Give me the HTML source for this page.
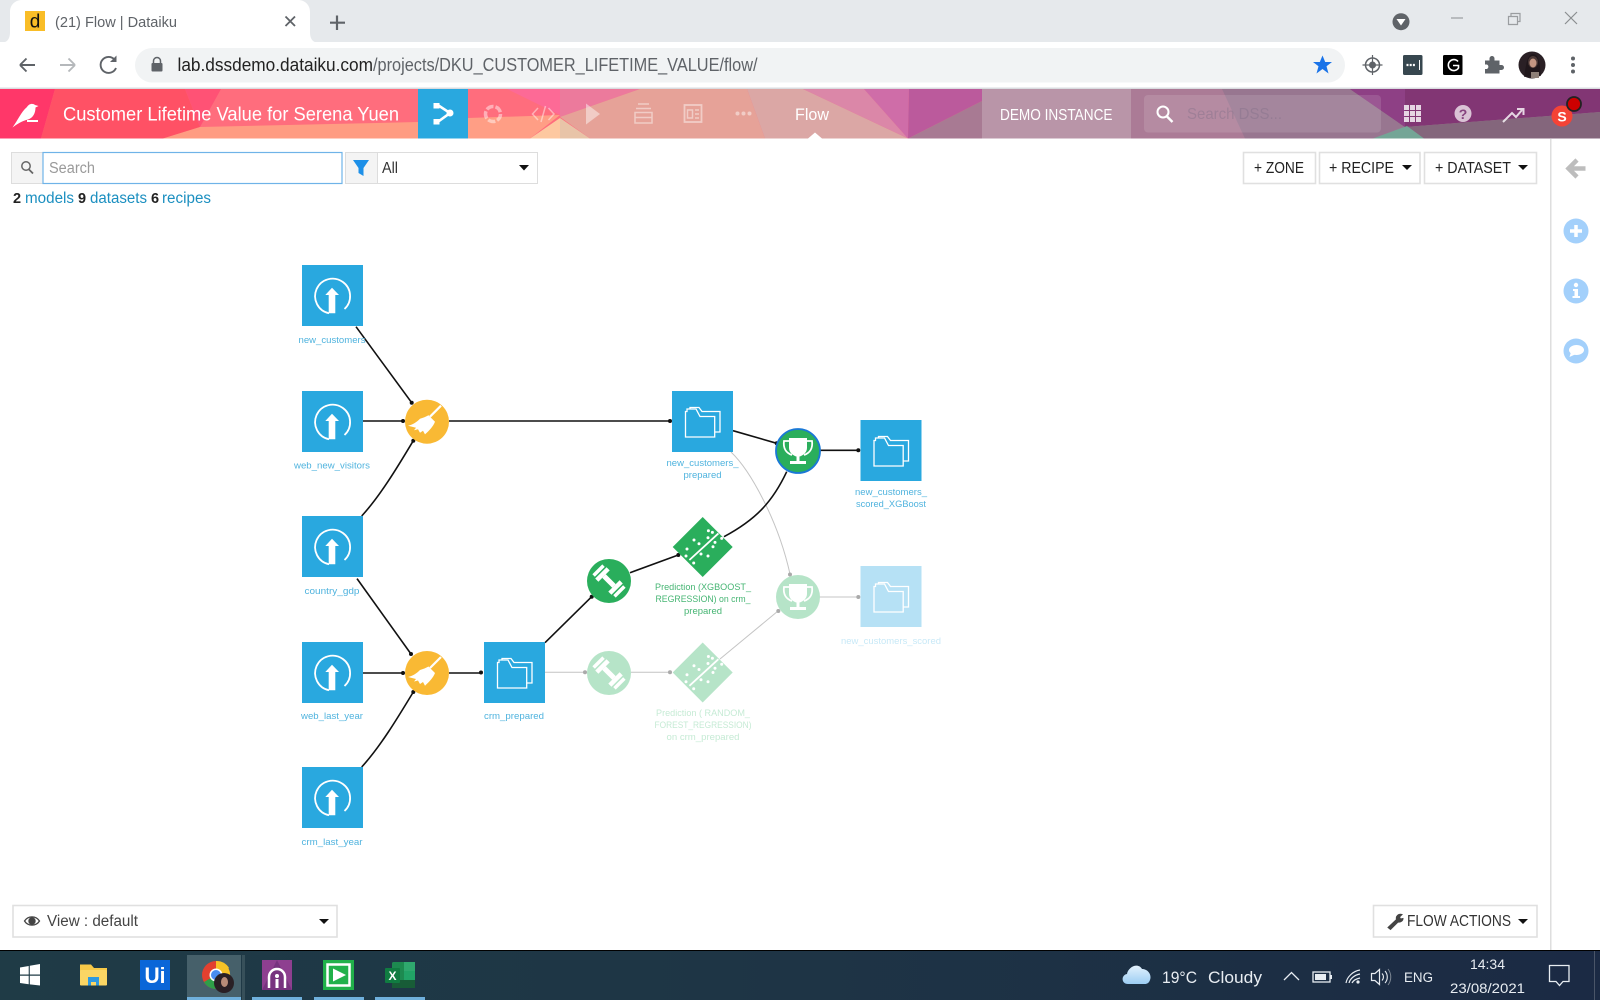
<!DOCTYPE html>
<html><head><meta charset="utf-8"><title>Flow | Dataiku</title>
<style>
html,body{margin:0;padding:0;background:#fff;width:1600px;height:1000px;overflow:hidden}
svg{display:block}
text{font-family:"Liberation Sans",sans-serif}
.l{font-size:9.5px;text-anchor:middle}
.b{fill:#4fb3de}.g{fill:#46b573}.fg{fill:#c6ebd5}.fb{fill:#c8e9f7}
.e{fill:none;stroke:#111;stroke-width:1.6}
.f{fill:none;stroke:#c4c4c4;stroke-width:1}
.btn{fill:#fff;stroke:#e0e0e0;stroke-width:1.6}
.bt{font-size:15.5px;fill:#222}
</style></head><body>
<svg width="1600" height="1000" viewBox="0 0 1600 1000" xmlns="http://www.w3.org/2000/svg">
<defs>
<g id="up"><rect width="61" height="61" fill="#29a8df"/><path d="M27 48.3A17.5 17.5 0 1 1 42.5 44" fill="none" stroke="#fff" stroke-width="1.8"/><path d="M26.7 48.3V30H23.3L30 22.7 37 30H33.3V48.3Z" fill="#fff"/></g>
<g id="fo"><path d="M13.5 46V20.500H15V18H24l4 7.500H42.700V46Z" fill="none" stroke="#fff" stroke-width="1.300"/><path d="M18 18V16.500H27l3 4H48V41H42.700" fill="none" stroke="#fff" stroke-width="1.300"/></g>
<g id="dt"><rect width="61" height="61" fill="#29a8df"/><use href="#fo"/></g>
<g id="dtf"><rect width="61" height="61" fill="#b6e1f5"/><use href="#fo"/></g>
<g id="br"><circle r="22" fill="#f9b934"/><path d="M3-5 14-16" stroke="#fff" stroke-width="2.200"/><path d="M1.500-6.500 8 0C6 5 2 9-2 12.700L-4 9-7 11-9 7.500-13 8.500-11 6-19 4C-14 3-10 0-7-3-4-4-1-5 1.500-6.500Z" fill="#fff"/></g>
<g id="tr"><path d="M-9-13H9V-3C9 2 4 5 1.500 5.500V10H8V13H-8V10H-1.500V5.500C-4 5-9 2-9-3Z" fill="#fff"/><path d="M-9-10H-14C-15-3-12 2-6 4M9-10H14C15-3 12 2 6 4" fill="none" stroke="#fff" stroke-width="1.800"/></g>
<g id="db"><g transform="rotate(45)" fill="#fff"><rect x="-7" y="-2.500" width="14" height="5"/><rect x="-11.500" y="-8" width="4.500" height="16"/><rect x="-16.500" y="-7" width="3.500" height="14"/><rect x="7" y="-8" width="4.500" height="16"/><rect x="13" y="-7" width="3.500" height="14"/></g></g>
<g id="dm"><path d="M-13.300 13.300 15.700-13.300" stroke="#fff" stroke-width="1.800"/><g fill="#fff"><circle cx="5.700" cy="-16" r="1.500"/><circle cx="9.700" cy="-14.300" r="1.500"/><circle cx="5.300" cy="-9" r="1.500"/><circle cx="-8.700" cy="-6.700" r="1.500"/><circle cx="-3.700" cy="-3" r="1.500"/><circle cx="12.300" cy="-4.300" r="1.500"/><circle cx="10.300" cy="0" r="1.500"/><circle cx="19" cy="-8.300" r="1.500"/><circle cx="-15.700" cy="2.300" r="1.500"/><circle cx="-16.700" cy="9.300" r="1.500"/><circle cx="-1.700" cy="7.300" r="1.500"/><circle cx="5.300" cy="9.300" r="1.500"/><circle cx="-9" cy="16.300" r="1.500"/></g></g>
<linearGradient id="cl" x1="0" x2="0" y1="0" y2="1"><stop offset="0" stop-color="#e3f2fd"/><stop offset="1" stop-color="#9ccdf3"/></linearGradient>
<linearGradient id="tb" x1="0" x2="1" y1="0" y2="0"><stop offset="0" stop-color="#1f3b46"/><stop offset=".45" stop-color="#1e3545"/><stop offset="1" stop-color="#1b2a44"/></linearGradient>
</defs>

<!-- chrome -->
<rect width="1600" height="42" fill="#e6e9ec"/>
<path d="M0 43C8 43 10 38 10 32V12C10 5 15 0 22 0H298C305 0 310 5 310 12V32C310 38 312 43 320 43Z" fill="#fff"/>
<rect x="25" y="11" width="20" height="20" fill="#f9bd27"/>
<text x="35" y="27.500" font-size="19" text-anchor="middle" fill="#111">d</text>
<text x="55" y="27" font-size="15" fill="#5f6368" textLength="122" lengthAdjust="spacingAndGlyphs">(21) Flow | Dataiku</text>
<path d="M285.500 16.500 295 26M295 16.500 285.500 26" stroke="#5f6368" stroke-width="1.800"/>
<path d="M337 15.500V30M330 22.700H345" stroke="#5f6368" stroke-width="2.200"/>
<circle cx="1401" cy="21.700" r="8.500" fill="#5f6368"/><path d="M1396.500 19H1405.500L1401 25.500Z" fill="#fff"/>
<path d="M1451 18H1463" stroke="#9a9da0" stroke-width="1.200"/>
<path d="M1508.500 16.500H1517.500V24.500H1508.500ZM1511 16.500V13.500H1520V21.500H1517.500" fill="none" stroke="#9a9da0" stroke-width="1.200"/>
<path d="M1565 12 1577 24M1577 12 1565 24" stroke="#8a8d90" stroke-width="1.200"/>
<rect y="42" width="1600" height="47" fill="#fff"/>
<rect y="87.500" width="1600" height="1.500" fill="#dadce0"/>
<path d="M20 65H35M20 65l6.500-6.500M20 65l6.500 6.500" fill="none" stroke="#5f6368" stroke-width="1.900"/>
<path d="M60 65H75M75 65l-6.500-6.500M75 65l-6.500 6.500" fill="none" stroke="#b5b8bb" stroke-width="1.900"/>
<path d="M114.500 59.500A8 8 0 1 0 116 68" fill="none" stroke="#5f6368" stroke-width="1.900"/><path d="M116.500 55.500V62H110Z" fill="#5f6368"/>
<rect x="135" y="48" width="1210" height="34.500" rx="17.200" fill="#f1f3f4"/>
<path d="M153.500 63.500V61A3.500 3.500 0 0 1 160.500 61V63.500" fill="none" stroke="#5f6368" stroke-width="1.500"/><rect x="151.500" y="63" width="11" height="8.500" rx="1" fill="#5f6368"/>
<text x="177.500" y="71" font-size="18" fill="#222" textLength="195.500" lengthAdjust="spacingAndGlyphs">lab.dssdemo.dataiku.com</text>
<text x="373" y="71" font-size="18" fill="#5f6368" textLength="384.500" lengthAdjust="spacingAndGlyphs">/projects/DKU_CUSTOMER_LIFETIME_VALUE/flow/</text>
<path d="M1322.500 55.500 1325.200 62H1332L1326.500 66.300 1328.500 73.500 1322.500 69 1316.500 73.500 1318.500 66.300 1313 62H1319.800Z" fill="#1a73e8"/>
<circle cx="1372.500" cy="65" r="7" fill="none" stroke="#5f6368" stroke-width="1.500"/><circle cx="1372.500" cy="65" r="3.500" fill="#5f6368"/><path d="M1372.500 55V75M1362.500 65H1382.500" stroke="#5f6368" stroke-width="1.200"/>
<rect x="1403" y="55" width="19.500" height="20" rx="1.500" fill="#37474f"/><path d="M1406.500 65h9" stroke="#fff" stroke-width="2.200" stroke-dasharray="2 1.200"/><path d="M1419.500 60V70" stroke="#fff" stroke-width="1"/>
<rect x="1443" y="55" width="19.500" height="20" rx="1.500" fill="#000"/><path d="M1458 61.500A5.500 5.500 0 1 0 1458.500 68V65.500H1453" fill="none" stroke="#fff" stroke-width="1.600"/>
<path d="M1485 61.500H1489.500V59.500A2.500 2.500 0 0 1 1494.500 59.500V61.500H1499.500V66H1501.500A2.500 2.500 0 0 1 1501.500 71H1499.500V74.500H1485V70H1487A2.500 2.500 0 0 0 1487 65.500H1485Z" fill="#5f6368" transform="translate(0,-1)"/>
<circle cx="1532" cy="65" r="13.500" fill="#2a2025"/><ellipse cx="1533" cy="62" rx="5" ry="6" fill="#d2a48e"/><path d="M1524 77C1526 66 1527 54 1533 54 1540 54 1540 68 1541 76Z" fill="#1d1418" opacity=".75"/><ellipse cx="1533" cy="63" rx="3.500" ry="4.500" fill="#c49682"/><rect x="1531" y="72" width="8" height="6" fill="#8e8078"/>
<g fill="#5f6368"><circle cx="1573" cy="58.500" r="2"/><circle cx="1573" cy="65" r="2"/><circle cx="1573" cy="71.500" r="2"/></g>

<!-- header -->
<rect y="89" width="1600" height="49.500" fill="#ff6d7d"/>
<polygon points="0,89 55,89 41,138.500 0,138.500" fill="#ff3769"/>
<polygon points="55,89 185,89 200,127 163,138.500 41,138.500" fill="#ff5165"/>
<polygon points="185,89 221,89 200,127" fill="#ff5275"/>
<polygon points="200,127 418,122 418,138.500 163,138.500" fill="#ff9c82"/>
<polygon points="468,118 560,115 530,138.500 468,138.500" fill="#ff9e85"/>
<polygon points="507,89 560,89 560,115" fill="#fd6a96"/>
<polygon points="530,138.500 560,118 560,138.500" fill="#fdc8a0"/>
<polygon points="560,118 590,138.500 560,138.500" fill="#e8c4a8"/>
<polygon points="560,89 640,89 560,117" fill="#ec7a9c"/>
<polygon points="640,89 747,89 765,138.500 590,138.500 560,117" fill="#e6a298"/>
<polygon points="747,89 803,89 908,138.500 765,138.500" fill="#dba7a5"/>
<polygon points="803,89 864,89 908,138.500" fill="#db87a8"/>
<polygon points="864,89 909,89 908,138.500" fill="#cf6da8"/>
<polygon points="909,89 982,89 982,101 908,138.500" fill="#bb5a9c"/>
<polygon points="908,138.500 982,101 982,138.500" fill="#a87a93"/>
<rect x="982" y="89" width="149" height="49.500" fill="#b995a8"/>
<rect x="1131" y="89" width="469" height="49.500" fill="#ab7b96"/>
<polygon points="1222,89 1350,89 1423,138.500 1245,138.500" fill="#987690"/>
<polygon points="1350,89 1600,89 1600,112 1405,127" fill="#823674"/>
<polygon points="1350,89 1405,89 1405,127" fill="#8e4085"/>
<polygon points="1405,127 1600,112 1600,138.500 1423,138.500" fill="#84667c"/>
<polygon points="1373,138.500 1407,126 1424,138.500" fill="#74a596"/>
<rect x="1144" y="95" width="237" height="37.500" rx="4" fill="#fff" opacity=".12"/>
<path d="M12.500 127.500C18 120 21 112 27 107 29 103.500 33 103 35 105L38.500 106 35.500 107.500C35.500 113 33 118 28 119.500 22 121 17 124 12.500 127.500Z" fill="#fff"/><rect x="27" y="120" width="11" height="2" fill="#fff"/>
<text x="63" y="120.500" font-size="19" fill="#fff" textLength="336" lengthAdjust="spacingAndGlyphs">Customer Lifetime Value for Serena Yuen</text>
<rect x="418" y="89" width="50" height="49.500" fill="#29a8df"/>
<path d="M437 104.500 450 113 437 122.500" fill="none" stroke="#fff" stroke-width="2.600"/><rect x="433.500" y="103" width="6" height="5.500" fill="#fff"/><rect x="433.500" y="119" width="6" height="5.500" fill="#fff"/><circle cx="450" cy="113" r="3.500" fill="#fff"/>
<g opacity=".45" fill="none" stroke="#fff">
<circle cx="493" cy="114" r="7.500" stroke-width="3.500" stroke-dasharray="7.400 2"/>
<path d="M538 108 532.500 114 538 120M548.500 108 554 114 548.500 120M545.500 106 541 122" stroke-width="1.500"/>
<path d="M586 103.500 600 114 586 124.500Z" fill="#fff" stroke="none"/>
<path d="M638 104H649M636 108.500H651M635 112.500H652V123H635ZM635 117.500H652" stroke-width="1.500"/>
<rect x="684.500" y="105" width="17" height="17" stroke-width="1.800"/>
<path d="M687.500 110h5v8h-5zM695 110h4M695 114h4M695 118h4" stroke-width="1.500"/>
<g fill="#fff" stroke="none"><circle cx="737.500" cy="113.500" r="2"/><circle cx="743.500" cy="113.500" r="2"/><circle cx="749.500" cy="113.500" r="2"/></g>
</g>
<text x="795" y="120" font-size="16.500" fill="#fff" textLength="34" lengthAdjust="spacingAndGlyphs">Flow</text>
<path d="M808 138.500 815 132.500 822 138.500Z" fill="#fff"/>
<text x="1000" y="120" font-size="15.500" fill="#fff" textLength="112.500" lengthAdjust="spacingAndGlyphs">DEMO INSTANCE</text>
<circle cx="1163" cy="112" r="5.500" fill="none" stroke="#fff" stroke-width="2"/><path d="M1167 116.500 1172.500 122" stroke="#fff" stroke-width="2.400"/>
<text x="1187" y="119" font-size="16" fill="#7f6f87" opacity=".4" textLength="95" lengthAdjust="spacingAndGlyphs">Search DSS...</text>
<g fill="#fff" opacity=".8"><rect x="1404" y="105" width="5" height="5"/><rect x="1410" y="105" width="5" height="5"/><rect x="1416" y="105" width="5" height="5"/><rect x="1404" y="111" width="5" height="5"/><rect x="1410" y="111" width="5" height="5"/><rect x="1416" y="111" width="5" height="5"/><rect x="1404" y="117" width="5" height="5"/><rect x="1410" y="117" width="5" height="5"/><rect x="1416" y="117" width="5" height="5"/></g>
<circle cx="1463" cy="113.500" r="8.500" fill="#fff" opacity=".7"/><text x="1463" y="119" font-size="14" font-weight="bold" text-anchor="middle" fill="#87447f">?</text>
<path d="M1503 122 1512 113 1516 117 1522 110M1517 109H1523.500V115" fill="none" stroke="#fff" stroke-opacity=".8" stroke-width="2"/>
<circle cx="1562" cy="116" r="10.500" fill="#f44336"/><text x="1562" y="121.500" font-size="14" font-weight="bold" text-anchor="middle" fill="#fff">S</text>
<circle cx="1574" cy="104" r="7" fill="#cc0000" stroke="#222" stroke-width="1.800"/>

<!-- controls -->
<rect x="11.500" y="152.500" width="32" height="31" fill="#f4f4f4" stroke="#ddd"/>
<circle cx="26" cy="166" r="4.200" fill="none" stroke="#666" stroke-width="1.500"/><path d="M29 169.500 33 173.500" stroke="#666" stroke-width="1.800"/>
<rect x="43" y="152.500" width="299" height="31" fill="#fff" stroke="#6fb3e8" stroke-width="1.200"/>
<text x="49" y="173" font-size="15.500" fill="#9a9a9a" textLength="46" lengthAdjust="spacingAndGlyphs">Search</text>
<rect x="345.500" y="152.500" width="32" height="31" fill="#f4f4f4" stroke="#ddd"/>
<path d="M353 160H369L363.500 168V176L358.500 173V168Z" fill="#1e90e8"/>
<rect x="377.500" y="152.500" width="160" height="31" fill="#fff" stroke="#ddd"/>
<text x="382" y="173" font-size="15.500" fill="#333" textLength="16" lengthAdjust="spacingAndGlyphs">All</text>
<path d="M519 165H529L524 170.500Z" fill="#111"/>
<g font-size="15.500">
<text x="13" y="203" font-weight="bold" fill="#222" font-size="14.500">2</text>
<text x="25" y="203" fill="#1b8fc0" textLength="49" lengthAdjust="spacingAndGlyphs">models</text>
<text x="78" y="203" font-weight="bold" fill="#222" font-size="14.500">9</text>
<text x="90" y="203" fill="#1b8fc0" textLength="57" lengthAdjust="spacingAndGlyphs">datasets</text>
<text x="151" y="203" font-weight="bold" fill="#222" font-size="14.500">6</text>
<text x="162" y="203" fill="#1b8fc0" textLength="49" lengthAdjust="spacingAndGlyphs">recipes</text>
</g>
<rect x="1243.500" y="152.500" width="72" height="31" class="btn"/>
<text x="1254" y="173" class="bt" textLength="50" lengthAdjust="spacingAndGlyphs">+ ZONE</text>
<rect x="1319.500" y="152.500" width="100.500" height="31" class="btn"/>
<text x="1329" y="173" class="bt" textLength="65" lengthAdjust="spacingAndGlyphs">+ RECIPE</text>
<path d="M1402 165H1412L1407 170Z" fill="#111"/>
<rect x="1424.500" y="152.500" width="112" height="31" class="btn"/>
<text x="1435" y="173" class="bt" textLength="76" lengthAdjust="spacingAndGlyphs">+ DATASET</text>
<path d="M1518 165H1528L1523 170Z" fill="#111"/>
<rect x="1550" y="139" width="1.500" height="811" fill="#dedede"/>
<path d="M1568.500 168.500H1585.500M1577 160 1568.500 168.500 1577 177" fill="none" stroke="#bdbdbd" stroke-width="4.500"/>
<circle cx="1576" cy="231" r="12.500" fill="#a3d0fb"/><path d="M1576 225V237M1570 231H1582" stroke="#fff" stroke-width="3.500"/>
<circle cx="1576" cy="291" r="12.500" fill="#a3d0fb"/><circle cx="1576" cy="285" r="2.200" fill="#fff"/><path d="M1573 289H1578V296H1580V298H1572.500V296H1574.500V291H1573Z" fill="#fff"/>
<circle cx="1576" cy="351" r="12.500" fill="#a3d0fb"/><ellipse cx="1576.500" cy="350" rx="7.500" ry="5" fill="#fff"/><path d="M1571 352 1569.500 357 1575 354.500Z" fill="#fff"/>

<!-- edges -->
<path class="f" d="M731 452C750 470 778 520 790 574"/>
<path class="f" d="M819 597H858"/><path class="f" d="M545 672.300H585"/><path class="f" d="M631 672.300H670"/><path class="f" d="M720 659 778 611"/>
<g fill="#aaa"><circle cx="790" cy="574.500" r="2"/><circle cx="858.300" cy="597" r="2"/><circle cx="585" cy="672.300" r="2"/><circle cx="670" cy="672.300" r="2"/><circle cx="778.300" cy="611" r="2"/></g>
<path class="e" d="M356 326.700 411.700 402.700"/>
<path class="e" d="M362.500 421H403"/>
<path class="e" d="M361.700 516C380 496 397 468 413.300 440.700"/>
<path class="e" d="M449 421H670"/>
<path class="e" d="M357 578.600 411 654"/>
<path class="e" d="M362.500 673H403"/>
<path class="e" d="M361.700 767C380 747 397 719 413.300 692"/>
<path class="e" d="M449 673H481"/>
<path class="e" d="M545 642.700 591.700 596.700"/>
<path class="e" d="M630 572.700 678.300 555"/>
<path class="e" d="M724 536.700C755 520 772 503 786.700 471.700"/>
<path class="e" d="M733 430.700 776.700 443.300"/>
<path class="e" d="M820 450.300H858.300"/>
<g fill="#111"><circle cx="411.700" cy="402.700" r="2"/><circle cx="403" cy="421" r="2"/><circle cx="413.300" cy="440.700" r="2"/><circle cx="670" cy="421" r="2"/><circle cx="411" cy="654" r="2"/><circle cx="403" cy="673" r="2"/><circle cx="413.300" cy="692" r="2"/><circle cx="481" cy="672.500" r="2"/><circle cx="591.700" cy="596.700" r="2"/><circle cx="678.300" cy="555" r="2"/><circle cx="776.700" cy="443.300" r="2"/><circle cx="858.300" cy="450.300" r="2"/></g>

<!-- nodes -->
<use href="#up" x="302" y="265"/><use href="#up" x="302" y="391"/><use href="#up" x="302" y="516"/><use href="#up" x="302" y="642"/><use href="#up" x="302" y="767"/>
<use href="#br" x="427" y="421.700"/><use href="#br" x="427" y="673"/>
<use href="#dt" x="484" y="642"/><use href="#dt" x="672" y="391"/><use href="#dt" x="860.500" y="420"/><use href="#dtf" x="860.500" y="566"/>
<circle cx="609" cy="581" r="22" fill="#2aae5c"/><use href="#db" x="609" y="581"/>
<circle cx="609" cy="673" r="22" fill="#b6e4c8"/><use href="#db" x="609" y="673"/>
<polygon points="702.700,517 732.700,547 702.700,577 672.700,547" fill="#2aae5c"/><use href="#dm" x="702.700" y="546.700"/>
<polygon points="702.700,642.500 732.700,672.500 702.700,702.500 672.700,672.500" fill="#b6e4c8"/><use href="#dm" x="702.700" y="672.500"/>
<circle cx="798" cy="451" r="22" fill="#2aae5c" stroke="#1a78d6" stroke-width="1.800"/><use href="#tr" x="798" y="451"/>
<circle cx="798" cy="597" r="22" fill="#b6e4c8"/><use href="#tr" x="798" y="597"/>

<!-- labels -->
<text class="l b" x="332" y="343" textLength="67" lengthAdjust="spacingAndGlyphs">new_customers</text>
<text class="l b" x="332" y="468.500" textLength="76" lengthAdjust="spacingAndGlyphs">web_new_visitors</text>
<text class="l b" x="332" y="594" textLength="55" lengthAdjust="spacingAndGlyphs">country_gdp</text>
<text class="l b" x="332" y="719" textLength="62" lengthAdjust="spacingAndGlyphs">web_last_year</text>
<text class="l b" x="332" y="845" textLength="61" lengthAdjust="spacingAndGlyphs">crm_last_year</text>
<text class="l b" x="514" y="719" textLength="60" lengthAdjust="spacingAndGlyphs">crm_prepared</text>
<text class="l b" x="702.500" y="466" textLength="72" lengthAdjust="spacingAndGlyphs">new_customers_</text>
<text class="l b" x="702.500" y="478" textLength="38" lengthAdjust="spacingAndGlyphs">prepared</text>
<text class="l b" x="891" y="495" textLength="72" lengthAdjust="spacingAndGlyphs">new_customers_</text>
<text class="l b" x="891" y="507" textLength="70" lengthAdjust="spacingAndGlyphs">scored_XGBoost</text>
<text class="l g" x="703" y="590" textLength="96" lengthAdjust="spacingAndGlyphs">Prediction (XGBOOST_</text>
<text class="l g" x="703" y="602" textLength="95" lengthAdjust="spacingAndGlyphs">REGRESSION) on crm_</text>
<text class="l g" x="703" y="614" textLength="38" lengthAdjust="spacingAndGlyphs">prepared</text>
<text class="l fg" x="703" y="716" textLength="94" lengthAdjust="spacingAndGlyphs">Prediction ( RANDOM_</text>
<text class="l fg" x="703" y="728" textLength="97" lengthAdjust="spacingAndGlyphs">FOREST_REGRESSION)</text>
<text class="l fg" x="703" y="740" textLength="73" lengthAdjust="spacingAndGlyphs">on crm_prepared</text>
<text class="l fb" x="891" y="644" textLength="100" lengthAdjust="spacingAndGlyphs">new_customers_scored</text>

<!-- bottom bar -->
<rect x="13" y="905.500" width="324" height="31.500" class="btn"/>
<path d="M24.500 921C28 915.500 36 915.500 39.500 921 36 926.500 28 926.500 24.500 921Z" fill="none" stroke="#444" stroke-width="1.300"/><circle cx="32" cy="921" r="3.700" fill="#444"/>
<text x="47" y="926" font-size="15.500" fill="#444" textLength="91" lengthAdjust="spacingAndGlyphs">View : default</text>
<path d="M319 919H329L324 924Z" fill="#111"/>
<rect x="1373.500" y="905.500" width="163.500" height="31.500" class="btn"/>
<path d="M1388 927.500 1396.500 919.500C1395.500 916 1398.500 913.500 1402 914.500L1399.500 917 1400.500 919 1403 918.500C1403 921 1400.500 922.500 1398 922L1390.500 929.500Z" fill="#444" stroke="#444"/>
<text x="1407" y="926" font-size="15.500" fill="#333" textLength="104" lengthAdjust="spacingAndGlyphs">FLOW ACTIONS</text>
<path d="M1518 919H1528L1523 924Z" fill="#111"/>

<!-- taskbar -->
<rect y="950" width="1600" height="50" fill="url(#tb)"/><rect y="950" width="1600" height="1" fill="#000"/>
<rect x="187" y="955" width="54" height="45" fill="#46606a"/><rect x="242" y="955" width="3" height="45" fill="#37505a"/>
<g fill="#6fb0dc"><rect x="187" y="997" width="54" height="3"/><rect x="252" y="997" width="50" height="3"/><rect x="314" y="997" width="50" height="3"/><rect x="375" y="997" width="50" height="3"/></g>
<path d="M20 967.500 28.700 966V974.500H20ZM29.800 965.800 40 964V974.500H29.800ZM20 975.700H28.700V984.200L20 983ZM29.800 975.700H40V985.500L29.800 984.400Z" fill="#fff"/>
<path d="M80 964.500H91L94 968H107V985H80Z" fill="#f7c948"/><rect x="80" y="970" width="27" height="15.500" rx="1" fill="#fbd664"/><path d="M88 979H99V985.500H96V982H91V985.500H88Z" fill="#2f9ae0"/><rect x="88" y="977" width="11" height="2.500" fill="#2f9ae0"/>
<rect x="140" y="960" width="30" height="30" fill="#0a66d8"/><text x="155" y="983" font-size="22" font-weight="bold" text-anchor="middle" fill="#fff" textLength="21" lengthAdjust="spacingAndGlyphs">Ui</text>
<circle cx="216" cy="975" r="14" fill="#e2402f"/><path d="M216 975 204 982A14 14 0 0 0 220 988.500Z" fill="#2f9e48"/><path d="M216 961A14 14 0 0 1 229 968L222 975H216Z" fill="#f6c226"/><path d="M216 975 228.500 968.500A14 14 0 0 1 220 988.500Z" fill="#f6c226"/><circle cx="216" cy="975" r="6.500" fill="#fff"/><circle cx="216" cy="975" r="5" fill="#4a8df0"/>
<circle cx="224" cy="983" r="10" fill="#2a2025"/><ellipse cx="224.500" cy="982" rx="3.500" ry="5" fill="#b98c78"/>
<rect x="262" y="960" width="30" height="30" fill="#8e3f90"/><path d="M262 990 277 960 292 990Z" fill="#6e2f78" opacity=".7"/><path d="M269 988V977A8 8 0 0 1 285 977V988" fill="none" stroke="#fff" stroke-width="2.500"/><circle cx="277" cy="976" r="2" fill="#fff"/><rect x="275.500" y="979" width="3" height="9" fill="#fff"/>
<rect x="323" y="960" width="31" height="30" fill="#21b14a"/><rect x="327.500" y="964.500" width="22" height="21" fill="none" stroke="#fff" stroke-width="2.500"/><path d="M333 968.500 346 975 333 981.500Z" fill="#fff"/>
<rect x="392" y="962" width="23" height="26" rx="1.500" fill="#1d8a50"/><rect x="404" y="962" width="11" height="9" fill="#2fa86e"/><rect x="404" y="971" width="11" height="9" fill="#21a366"/><rect x="392" y="980" width="23" height="8" fill="#185c37"/><rect x="385" y="968" width="15" height="15" rx="1" fill="#107c41"/><text x="392.500" y="980" font-size="12" font-weight="bold" text-anchor="middle" fill="#fff">X</text>

<path d="M1128 984C1121 984 1121 975 1127 974 1128 967 1138 962 1142 969 1148 969 1152 975 1150 980 1149 983 1147 984 1145 984Z" fill="url(#cl)"/>
<g fill="#e8edf2">
<text x="1162" y="983" font-size="17" textLength="35" lengthAdjust="spacingAndGlyphs">19°C</text>
<text x="1208" y="983" font-size="17" textLength="54" lengthAdjust="spacingAndGlyphs">Cloudy</text>
<text x="1404" y="982" font-size="13.500" textLength="29" lengthAdjust="spacingAndGlyphs">ENG</text>
<text x="1470" y="969" font-size="14" textLength="35" lengthAdjust="spacingAndGlyphs">14:34</text>
<text x="1450" y="993" font-size="14" textLength="75" lengthAdjust="spacingAndGlyphs">23/08/2021</text>
</g>
<path d="M1284 980 1291.500 972.500 1299 980" fill="none" stroke="#e8edf2" stroke-width="1.300"/>
<rect x="1313" y="972" width="17" height="10" fill="none" stroke="#e8edf2" stroke-width="1.300"/><rect x="1315" y="974" width="11" height="6" fill="#e8edf2"/><rect x="1330.500" y="975" width="1.500" height="4" fill="#e8edf2"/>
<path d="M1346 983C1347 977 1353 971 1360 970M1349 983C1350 979 1354 975 1360 974M1352 983C1353 981 1355 979 1360 978" fill="none" stroke="#e8edf2" stroke-width="1.200"/><circle cx="1358" cy="982" r="1.600" fill="#e8edf2"/>
<path d="M1371.500 973.500H1375L1379.500 969.500V984.500L1375 980.500H1371.500Z" fill="none" stroke="#e8edf2" stroke-width="1.200"/><path d="M1382 973.500A5 5 0 0 1 1382 980.500M1385 971A9 9 0 0 1 1385 983" fill="none" stroke="#e8edf2" stroke-width="1.100"/><path d="M1388 969A13 13 0 0 1 1388 985" fill="none" stroke="#7d8794" stroke-width="1"/>
<path d="M1549.500 965.500H1569V981.500H1563L1559.500 985.500 1556 981.500H1549.500Z" fill="none" stroke="#e8edf2" stroke-width="1.300"/>
<rect x="1594" y="951" width="1" height="49" fill="#4a5568"/>
</svg>
</body></html>
